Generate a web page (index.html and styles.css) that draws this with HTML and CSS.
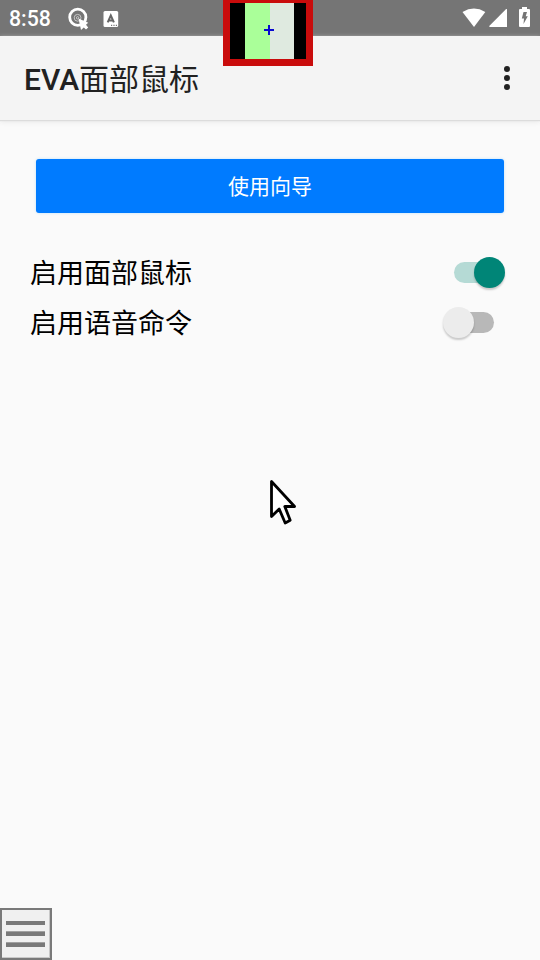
FILE: index.html
```html
<!DOCTYPE html>
<html lang="zh-CN">
<head>
<meta charset="utf-8">
<title>EVA面部鼠标</title>
<link rel="stylesheet" href="styles.css">
</head>
<body>
<header class="status-bar">
  <span class="clock">8:58</span>
  <svg class="notice-target" width="22" height="24" viewBox="0 0 22 24">
    <circle cx="9.8" cy="10.3" r="8.1" fill="none" stroke="#fff" stroke-width="2.8"/>
    <circle cx="9.6" cy="10.8" r="3.4" fill="none" stroke="#c8c8c8" stroke-width="1"/>
    <circle cx="9.6" cy="10.8" r="1.2" fill="none" stroke="#ddd" stroke-width=".8"/>
    <path d="M10.5 11.5l9.7 4.3-2.2 2 2.2 2.6-2.2 2-2.2-1.8-2.8 2.4z" fill="#fff"/>
  </svg>
  <svg class="notice-app" width="16" height="16" viewBox="0 0 16 16">
    <rect x=".5" width="14.7" height="16" rx="1.5" fill="#fff"/>
    <path d="M4.7 11.3L7.8 4.5l3.1 6.8M5.9 9.4h3.8" fill="none" stroke="#656565" stroke-width="2"/>
    <path d="M8 14.3h1.2M10.4 14.3h1.2M12.8 14.3H14" stroke="#757575" stroke-width="1.2"/>
  </svg>
  <div class="system-icons">
    <svg width="24" height="20" viewBox="0 0 24 20"><path d="M.5 4Q12-2.8 23.3 4L12 19z" fill="#fff"/></svg>
    <svg class="signal" width="18" height="18" viewBox="0 0 18 18"><path d="M18 0v18H.8Q-.3 17.6.5 16.7L16.7.5Q17.5-.2 18 0z" fill="#fff"/></svg>
    <svg class="battery" width="11" height="20" viewBox="0 0 11 20">
      <path d="M3 0h5v2h2q1 0 1 1v16q0 1-1 1H1q-1 0-1-1V3q0-1 1-1h2z" fill="#fff"/>
      <path d="M4.5 5H8L6.7 9.2H8.8L4.5 17 5 11.5H2.8z" fill="#757575"/>
    </svg>
  </div>
</header>
<div class="app-bar">
  <h1>EVA<span>面部鼠标</span></h1>
  <svg width="6" height="24" viewBox="0 0 6 24" fill="#212121"><circle cx="3" cy="3" r="3"/><circle cx="3" cy="12" r="3"/><circle cx="3" cy="21" r="3"/></svg>
</div>
<main>
  <button class="guide">使用向导</button>
  <div class="setting"><span class="label">启用面部鼠标</span><span class="switch on"></span></div>
  <div class="setting"><span class="label">启用语音命令</span><span class="switch off"></span></div>
</main>
<div class="camera">
  <div class="preview"></div>
  <svg class="cross" width="10" height="10" viewBox="0 0 10 10"><path d="M0 4h10v2H0zM4 0h2v10H4z" fill="#0909d0"/></svg>
</div>
<svg class="pointer" width="32" height="50" viewBox="0 0 32 50"><path d="M4.5 4.5V39.6L12.2 32L18.2 46L23.2 43.2L17.8 29.5H27.6z" fill="#fff" stroke="#000" stroke-width="2.8" stroke-linejoin="round"/></svg>
<div class="dock"><i></i><i></i><i></i></div>
</body>
</html>
```

FILE: styles.css
```css
* { box-sizing: border-box; }
body {
  margin: 0;
  height: 960px;
  position: relative;
  overflow: hidden;
  background: #fafafa;
  font-family: Roboto, "Noto Sans CJK SC", sans-serif;
}
svg { display: block; flex: none; }
.status-bar {
  height: 36px;
  padding: 0 10px 0 9px;
  display: flex;
  align-items: center;
  background: #757575;
}
.clock {
  width: 59px;
  color: #fff;
  font-size: 21.3px;
  font-weight: 500;
  line-height: 36px;
  padding-top: 1px;
}
.notice-target { margin-top: 2px; }
.notice-app { margin-left: 13px; margin-top: 1px; }
.system-icons {
  margin-left: auto;
  display: flex;
  align-items: center;
}
.system-icons .signal { margin-left: 3px; }
.system-icons .battery { margin-left: 12px; margin-top: -2px; }
.app-bar {
  height: 84px;
  padding: 0 30px 0 24px;
  display: flex;
  align-items: center;
  justify-content: space-between;
  background: #f4f4f4;
  box-shadow: 0 1px 1px #dcdcdc, 0 2px 5px #e8e8e8;
}
h1 {
  margin: 0;
  padding-top: 3px;
  color: #212121;
  font-size: 30px;
  font-weight: 500;
  line-height: 44px;
}
h1 span { font-weight: 400; }
main { padding: 39px 36px 0 30px; }
.guide {
  display: block;
  width: 468px;
  height: 54px;
  margin: 0 0 34px 6px;
  padding: 2px 0 0;
  border: 0;
  border-radius: 3px;
  background: #007bff;
  box-shadow: 0 0 3px #bcdffa;
  color: #fff;
  font: 21px/52px Roboto, "Noto Sans CJK SC", sans-serif;
}
.setting {
  height: 50px;
  display: flex;
  align-items: center;
  justify-content: space-between;
  color: #000;
  font-size: 27px;
  line-height: 40px;
}
.label { padding-top: 4px; }
.switch {
  display: flex;
  align-items: center;
  width: 40px;
  height: 21px;
  border-radius: 11px;
}
.switch::before {
  content: "";
  flex: none;
  width: 31px;
  height: 31px;
  border-radius: 50%;
  box-shadow: 0 2px 2px #0003;
}
.on { margin-right: 10px; background: #b5dad5; }
.on::before { margin-left: 20px; background: #008577; }
.off { margin-right: 10px; background: #b8b8b8; }
.off::before { margin-left: -11px; background: #ececec; }
.camera {
  position: absolute;
  left: 223px;
  top: 0;
  width: 90px;
  height: 66px;
  padding: 3px 7px 7px;
  background: #c90c0c;
}
.preview {
  height: 56px;
  background: linear-gradient(90deg, #000 15px, #aaff99 15px 40px, #dfeae0 40px 64px, #000 64px);
}
.cross { position: absolute; left: 41px; top: 25px; }
.pointer { position: absolute; left: 267px; top: 477px; }
.dock {
  position: absolute;
  left: 0;
  top: 908px;
  width: 52px;
  height: 52px;
  padding: 10px 4px;
  border: 2px solid #797979;
  background: #f0f0f0;
  box-shadow: inset -1px -1px #c8c8c8;
  display: flex;
  flex-direction: column;
  gap: 6px;
}
.dock i {
  width: 39px;
  height: 5px;
  background: #797979;
  border-top: 1px solid #a0a0a0;
}
.dock i:first-child { height: 4px; margin-top: 1px; border-top: 0; }
```
